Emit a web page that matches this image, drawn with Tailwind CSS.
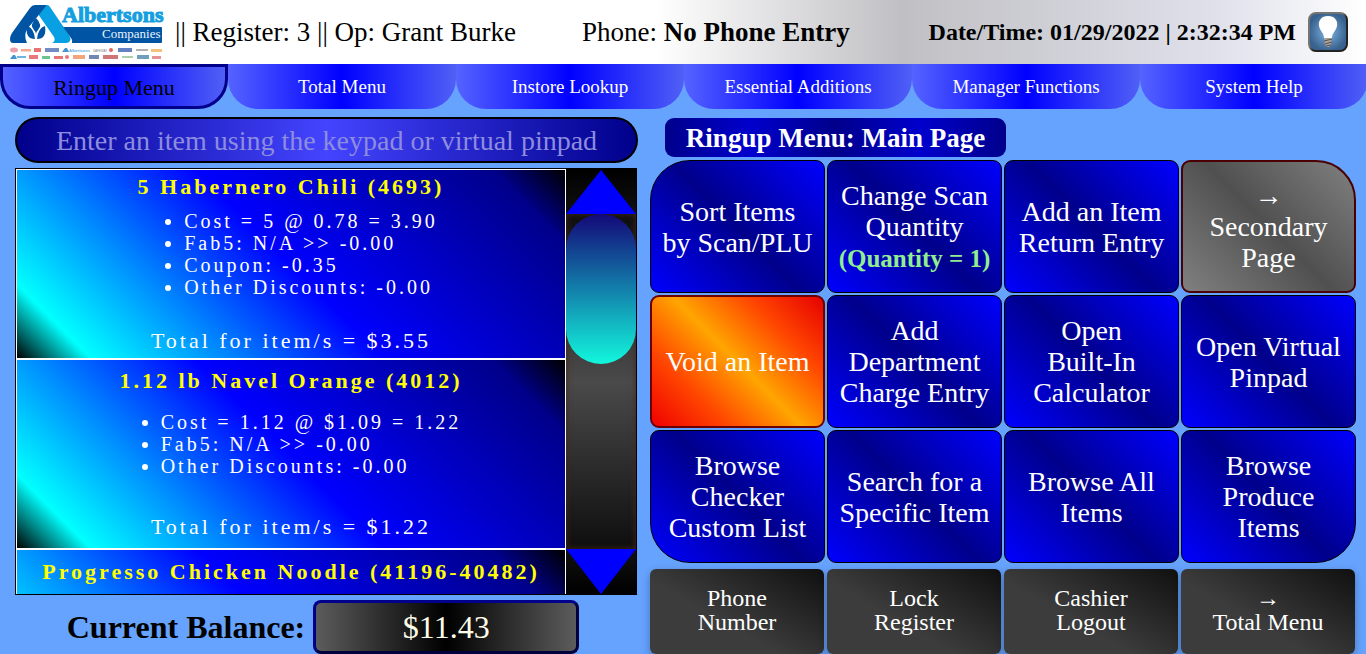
<!DOCTYPE html>
<html lang="en">
<head>
<meta charset="utf-8">
<meta name="viewport" content="width=device-width, initial-scale=1">
<title>Register - Ringup Menu</title>
<script src="https://cdn.jsdelivr.net/npm/@tailwindcss/browser@4"></script>
</head>
<body class="flex h-screen flex-col overflow-hidden bg-[#66a3ff] font-['Liberation_Serif',serif]">

<header class="flex h-16 shrink-0 items-center bg-[linear-gradient(90deg,#fff_0%,#fff_48%,#c0c0c4_66%,#dfe0ea_89%,#fff_100%)] pr-[18px] pl-[9px] text-[27px] leading-8 text-black">
  <svg class="h-16 w-[158px] shrink-0" viewBox="0 0 158 64" role="img" aria-label="Albertsons Companies">
    <path d="M38 5 Q40 5 41 7 L60 35 Q63 40 60 42 Q59 43 57 43 H43 Q47 41 45 37 L29 14 Z" fill="#08a0e2"/>
    <path d="M26 5 H38 L19 28 Q14 35 18 43 H4 Q1 43 1 39 Q1 36 3 33 L21 8 Q23 5 26 5 Z" fill="#0054a4"/>
    <path d="M54 27 H152 Q153 27 153 28 V42 Q153 43 152 43 H63 Q64 40 62 38 Z" fill="#0054a4"/>
    <path d="M27 18 Q20 25 25 30 Q27 32 27 34 Q27 32 29 30 Q34 25 27 18 Z" fill="#0054a4"/>
    <path d="M18 26 Q25 28 26 39 Q16 39 18 26 Z M36 26 Q29 28 28 39 Q38 39 36 26 Z" fill="#0054a4"/>
    <text x="53" y="22" font-family="Liberation Serif, serif" font-weight="bold" font-size="22" fill="#159fe0" stroke="#159fe0" stroke-width="1">Albertsons</text>
    <text x="93" y="38" font-family="Liberation Serif, serif" font-size="13" fill="#e9f3fc">Companies</text>
    <g opacity="0.75">
      <ellipse cx="5" cy="50" rx="4" ry="2.5" fill="#e88090"/><rect x="12" y="49" width="10" height="2.500" fill="#f0906a"/><rect x="25" y="48" width="7" height="4" fill="#e04848"/><rect x="36" y="48" width="14" height="4" fill="#4468b4"/>
      <path d="M53 52 L56 48 H58 L60 52 Z" fill="#0870c0"/>
      <text x="60" y="52" font-family="Liberation Sans, sans-serif" font-weight="bold" font-size="4" fill="#1590d8">Albertsons</text>
      <text x="84" y="52" font-family="Liberation Sans, sans-serif" font-size="3" fill="#555">SAFEWAY</text>
      <circle cx="102" cy="50" r="2" fill="#e03030"/><rect x="109" y="48" width="14" height="4" fill="#3058b0"/><rect x="127" y="49" width="12" height="2" fill="#999"/><rect x="142" y="49" width="11" height="3" fill="#f0b050"/>
      <path d="M1 59 L4 55 H6 L8 59 Z" fill="#0870c0"/><rect x="8" y="56" width="9" height="2" fill="#40a0d8"/><rect x="20" y="55" width="9" height="4" fill="#e05050"/><rect x="33" y="56" width="8" height="3" fill="#40b070"/><rect x="45" y="56" width="9" height="3" fill="#e04848"/><circle cx="58" cy="57" r="2" fill="#e04848"/><rect x="64" y="55" width="12" height="4" fill="#f08850"/><rect x="80" y="55" width="10" height="4" fill="#486098"/><rect x="94" y="55" width="15" height="4" fill="#c04848"/><rect x="113" y="56" width="11" height="2" fill="#90c090"/><rect x="128" y="55" width="12" height="4" fill="#4080a8"/><rect x="143" y="56" width="9" height="3" fill="#e07070"/>
    </g>
  </svg>
  <p class="ml-2 whitespace-nowrap">|| Register: 3 || Op: Grant Burke</p>
  <p class="mr-auto ml-[66px] whitespace-nowrap">Phone: <b>No Phone Entry</b></p>
  <p class="text-2xl leading-8 font-bold whitespace-nowrap">Date/Time: 01/29/2022 | 2:32:34 PM</p>
  <button type="button" aria-label="Toggle light" class="ml-3 size-10 shrink-0">
    <svg class="size-10" viewBox="0 0 40 40" aria-hidden="true">
      <defs><radialGradient id="glow"><stop offset="0" stop-color="#7eb6e4"/><stop offset="1" stop-color="#39618e"/></radialGradient>
      <linearGradient id="rim" x1="0" y1="0" x2="1" y2="1"><stop offset=".45" stop-color="#747474"/><stop offset=".55" stop-color="#222"/></linearGradient></defs>
      <rect x="1" y="1" width="38" height="38" rx="7" fill="url(#glow)" stroke="url(#rim)" stroke-width="2"/>
      <path d="M20 4 C13 4 10 9 11 14 C12 19 16 21 16 26 H24 C24 21 28 19 29 14 C30 9 27 4 20 4 Z" fill="#fff"/>
      <path d="M16 26 H24 L23 33 L21 35 H19 L17 33 Z" fill="#aaa39b"/><path d="M16 29 L24 27 M17 32 L24 30 M18 34 L23 33" stroke="#554f4a"/>
    </svg>
  </button>
</header>

<nav class="-mr-0.5 grid h-[45px] shrink-0 grid-cols-6 text-[19px] text-white [&>button]:pt-0.5" aria-label="Menus">
  <button type="button" aria-current="page" class="rounded-b-[30px] border-3 border-[#00008b] bg-[linear-gradient(90deg,#5563ff,#00f_50%,#5060f5)] text-[22px] text-black">Ringup Menu</button>
  <button type="button" class="rounded-b-[30px] bg-[linear-gradient(90deg,#5563ff,#00f_50%,#5060f5)]">Total Menu</button>
  <button type="button" class="rounded-b-[30px] bg-[linear-gradient(90deg,#5563ff,#00f_50%,#5060f5)]">Instore Lookup</button>
  <button type="button" class="rounded-b-[30px] bg-[linear-gradient(90deg,#5563ff,#00f_50%,#5060f5)]">Essential Additions</button>
  <button type="button" class="rounded-b-[30px] bg-[linear-gradient(90deg,#5563ff,#00f_50%,#5060f5)]">Manager Functions</button>
  <button type="button" class="rounded-b-[30px] bg-[linear-gradient(90deg,#5563ff,#00f_50%,#5060f5)]">System Help</button>
</nav>

<main class="flex min-h-0 flex-1 gap-3 pr-[10px] pl-[15px]">
  <section class="flex min-w-0 flex-[623] flex-col pt-2" aria-label="Current order">
    <input type="text" aria-label="Item entry" placeholder="Enter an item using the keypad or virtual pinpad" class="h-[46px] w-full shrink-0 rounded-[23px] border-2 border-black bg-[linear-gradient(90deg,#00008b,#4444ff_50%,#00008b)] pt-0.5 text-center text-[28px] text-white placeholder:text-[#8d8ddf]">
    <div class="mt-[5px] mr-px flex min-h-0 flex-1 border border-black bg-black">
      <ol class="min-w-0 flex-1 overflow-hidden text-xl leading-[22px] tracking-[3px] text-white">
        <li class="flex h-[190px] flex-col items-center justify-around border border-white bg-[linear-gradient(45deg,#000,#0ff_10%,#00f_50%,#00008b_90%,#000)]">
          <h2 class="text-[22px] leading-6 font-bold text-[#ff0]">5 Habernero Chili (4693)</h2>
          <ul class="mb-5 list-disc pl-10">
            <li>Cost = 5 @ 0.78 = 3.90</li><li>Fab5: N/A &gt;&gt; -0.00</li><li>Coupon: -0.35</li><li>Other Discounts: -0.00</li>
          </ul>
          <p class="text-[22px] leading-6">Total for item/s = $3.55</p>
        </li>
        <li class="flex h-[190px] flex-col items-center justify-around border border-white bg-[linear-gradient(45deg,#000,#0ff_10%,#00f_50%,#00008b_90%,#000)]">
          <h2 class="text-[22px] leading-6 font-bold text-[#ff0]">1.12 lb Navel Orange (4012)</h2>
          <ul class="mb-5 list-disc pl-10">
            <li>Cost = 1.12 @ $1.09 = 1.22</li><li>Fab5: N/A &gt;&gt; -0.00</li><li>Other Discounts: -0.00</li>
          </ul>
          <p class="text-[22px] leading-6">Total for item/s = $1.22</p>
        </li>
        <li class="flex h-[190px] flex-col items-center border border-white bg-[linear-gradient(45deg,#000,#0ff_10%,#00f_50%,#00008b_90%,#000)] pt-2.5">
          <h2 class="text-[22px] leading-6 font-bold text-[#ff0]">Progresso Chicken Noodle (41196-40482)</h2>
        </li>
      </ol>
      <div class="flex w-[70px] shrink-0 flex-col">
        <button type="button" aria-label="Scroll up" class="h-[45px] shrink-0 bg-[linear-gradient(#000,#111)]"><svg class="h-full w-full" viewBox="0 0 70 45" preserveAspectRatio="none"><path d="M35 1 L70 45 H0 Z" fill="#00f"/></svg></button>
        <div class="min-h-0 flex-1 bg-[linear-gradient(#0e0e0e,#4a4a4a_50%,#0e0e0e)] shadow-[inset_0_0_6px_#4a2a18]"><div class="h-[150px] rounded-[35px] bg-[linear-gradient(#130878,#12f7dd)]"></div></div>
        <button type="button" aria-label="Scroll down" class="h-[45px] shrink-0 bg-[linear-gradient(#111,#000)]"><svg class="h-full w-full" viewBox="0 0 70 45" preserveAspectRatio="none"><path d="M0 0 H70 L35 45 Z" fill="#00f"/></svg></button>
      </div>
    </div>
    <div class="mt-[5px] flex h-[54px] shrink-0 items-center justify-center gap-2 pr-[7px] text-[32px] text-black">
      <label for="balance" class="font-bold whitespace-nowrap">Current Balance:</label>
      <output id="balance" class="flex h-full w-[266px] items-center justify-center rounded-lg border-3 border-t-[#00008b] border-r-[#00003c] border-b-[#00003c] border-l-[#00008b] bg-[linear-gradient(90deg,#5c5c5c,#000_50%,#5c5c5c)] text-[#fffde8]">$11.43</output>
    </div>
  </section>

  <section class="flex min-w-0 flex-[706] flex-col pt-[9px]" aria-label="Ringup Menu actions">
    <h1 class="mb-[3px] ml-[15px] flex h-[39px] w-[341px] shrink-0 items-center justify-center rounded-[9px] bg-[linear-gradient(90deg,#00008b,#0000cd_25%,#00008b_50%,#0000cd_75%,#00008b)] pt-0.5 text-[27px] font-bold text-white">Ringup Menu: Main Page</h1>
    <div class="grid min-h-0 flex-1 grid-cols-4 grid-rows-3 gap-0.5 text-[28px] leading-[31px] text-white [&>button]:rounded-[9px] [&>button]:border [&>button]:border-black [&>button]:bg-[linear-gradient(45deg,#00f,#00008b_50%,#00f)] [&>button]:px-2">
      <button type="button" class="rounded-tl-[40px]!">Sort Items<br>by Scan/PLU</button>
      <button type="button">Change Scan Quantity<br><b class="text-[25px] text-[#90ee90]">(Quantity = 1)</b></button>
      <button type="button">Add an Item Return Entry</button>
      <button type="button" class="rounded-tr-[40px]! border-2! border-[#4a0000]! bg-[linear-gradient(45deg,#808080,#505050_50%,#808080)]!">→<br>Secondary<br>Page</button>
      <button type="button" class="border-2! border-[#6a0000]! bg-[linear-gradient(45deg,#f00000,#ff4500_25%,#ffa500_50%,#ff4500_75%,#e60000)]!">Void an Item</button>
      <button type="button">Add<br>Department<br>Charge Entry</button>
      <button type="button">Open<br>Built-In<br>Calculator</button>
      <button type="button">Open Virtual<br>Pinpad</button>
      <button type="button" class="rounded-bl-[40px]!">Browse<br>Checker<br>Custom List</button>
      <button type="button">Search for a<br>Specific Item</button>
      <button type="button">Browse All<br>Items</button>
      <button type="button" class="rounded-br-[40px]!">Browse<br>Produce<br>Items</button>
    </div>
    <div class="mt-1.5 mr-px grid h-[85px] shrink-0 grid-cols-4 gap-[3px] text-2xl leading-6 text-white [&>button]:rounded-md [&>button]:bg-[linear-gradient(30deg,#3c3c3c_40%,#101010)] [&>button]:pb-1 [&>button]:shadow-[0_3px_8px_#0000004d]">
      <button type="button">Phone<br>Number</button>
      <button type="button">Lock<br>Register</button>
      <button type="button">Cashier<br>Logout</button>
      <button type="button">→<br>Total Menu</button>
    </div>
  </section>
</main>
</body>
</html>
